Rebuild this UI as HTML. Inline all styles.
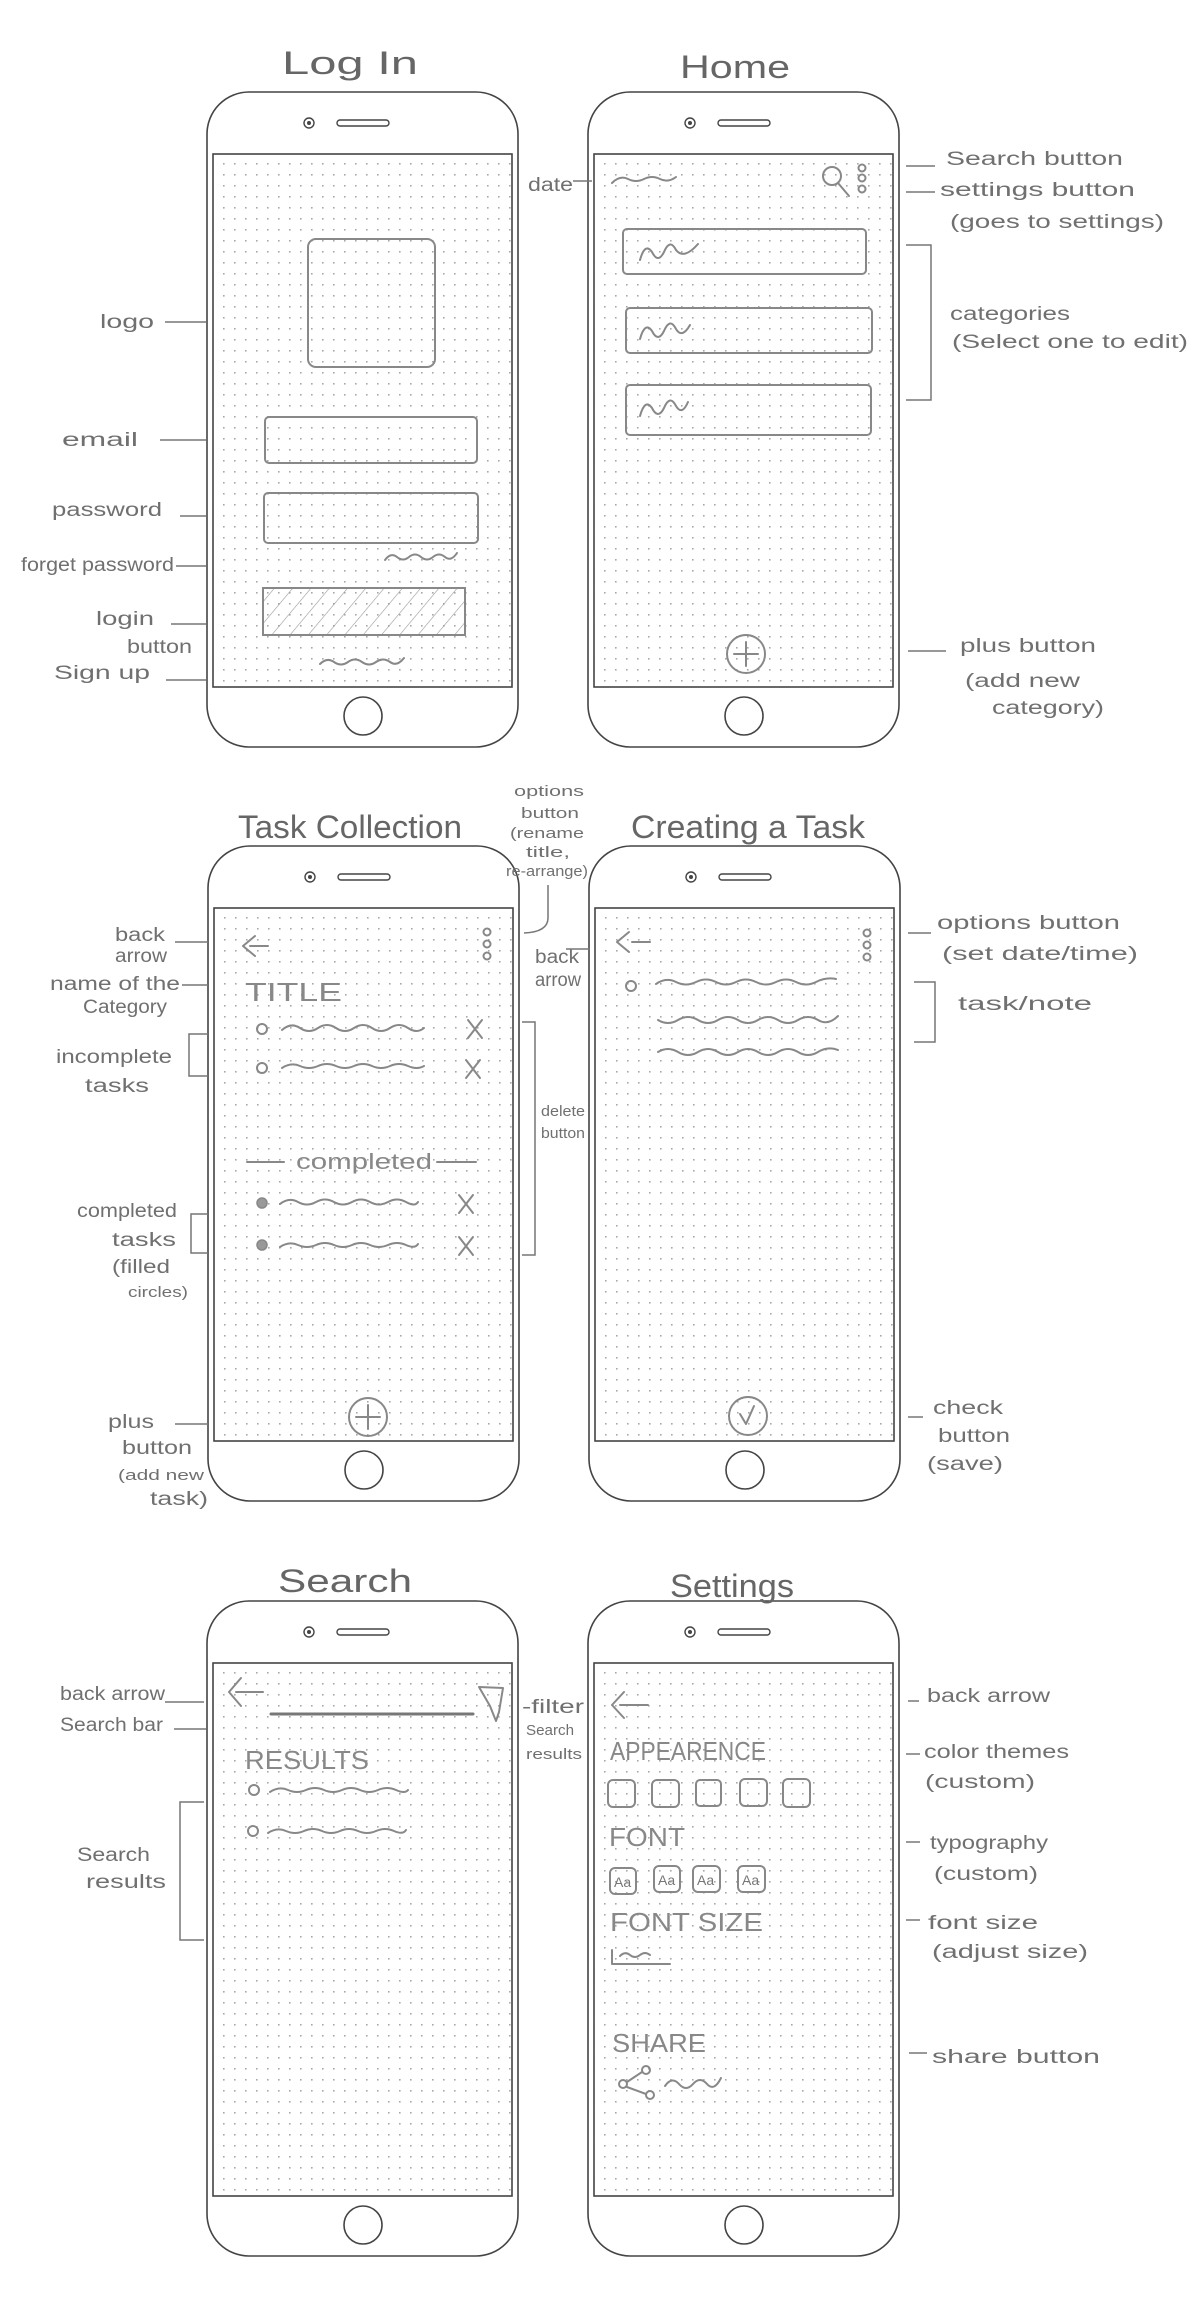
<!DOCTYPE html>
<html><head><meta charset="utf-8"><style>
html,body{margin:0;padding:0;background:#fff;}
svg{display:block;}
text{font-family:"Liberation Sans",sans-serif;fill:#707070;}
.t{font-size:32px;fill:#666;}
.l{font-size:19px;}
.s{font-size:15px;}
.sc{font-size:26px;fill:#888;}
.p{fill:none;stroke:#888;stroke-width:2;stroke-linecap:round;stroke-linejoin:round;}
.ln{fill:none;stroke:#777;stroke-width:1.5;}
</style></head><body>
<svg width="1200" height="2306" viewBox="0 0 1200 2306" xmlns="http://www.w3.org/2000/svg">
<defs>
<pattern id="dots" x="0" y="0" width="11" height="11" patternUnits="userSpaceOnUse">
<rect x="5" y="5" width="1.6" height="1.6" fill="#a8a8a8"/>
</pattern>
<pattern id="hatch" width="14" height="14" patternUnits="userSpaceOnUse" patternTransform="rotate(40)">
<line x1="0" y1="0" x2="0" y2="14" stroke="#999" stroke-width="1.2"/>
</pattern>
<g id="phone">
<rect x="0" y="0" width="311" height="655" rx="42" fill="#fff" stroke="#444" stroke-width="1.6"/>
<rect x="6" y="62" width="299" height="533" fill="url(#dots)" stroke="#444" stroke-width="1.6"/>
<circle cx="102" cy="31" r="5" fill="none" stroke="#444" stroke-width="1.4"/>
<circle cx="102" cy="31" r="2" fill="#444"/>
<rect x="130" y="28" width="52" height="6" rx="3" fill="none" stroke="#444" stroke-width="1.4"/>
<circle cx="156" cy="624" r="19" fill="none" stroke="#444" stroke-width="1.6"/>
</g>
</defs>

<use href="#phone" x="207" y="92"/>
<use href="#phone" x="588" y="92"/>
<use href="#phone" x="208" y="846"/>
<use href="#phone" x="589" y="846"/>
<use href="#phone" x="207" y="1601"/>
<use href="#phone" x="588" y="1601"/>

<text class="t" x="282" y="74" textLength="136" lengthAdjust="spacingAndGlyphs">Log In</text>
<text class="t" x="680" y="78" textLength="110" lengthAdjust="spacingAndGlyphs">Home</text>
<text class="t" x="238" y="838" textLength="224" lengthAdjust="spacingAndGlyphs">Task Collection</text>
<text class="t" x="631" y="838" textLength="234" lengthAdjust="spacingAndGlyphs">Creating a Task</text>
<text class="t" x="278" y="1592" textLength="134" lengthAdjust="spacingAndGlyphs">Search</text>
<text class="t" x="670" y="1597" textLength="124" lengthAdjust="spacingAndGlyphs">Settings</text>

<!-- LOG IN -->
<rect class="p" x="308" y="239" width="127" height="128" rx="8"/>
<rect class="p" x="265" y="417" width="212" height="46" rx="4"/>
<rect class="p" x="264" y="493" width="214" height="50" rx="4"/>
<path class="p" d="M385 560 q6 -8 12 -3 t12 0 t12 0 t12 0 t12 0 t12 -4"/>
<rect x="263" y="588" width="202" height="47" fill="url(#hatch)" stroke="#888" stroke-width="2"/>
<path class="p" d="M320 664 q7 -7 14 -2 t14 0 t14 0 t14 0 t14 0 t14 -4"/>
<text class="l" x="100" y="328" textLength="54" lengthAdjust="spacingAndGlyphs">logo</text>
<line class="ln" x1="165" y1="322" x2="206" y2="322"/>
<text class="l" x="62" y="446" textLength="76" lengthAdjust="spacingAndGlyphs">email</text>
<line class="ln" x1="160" y1="440" x2="206" y2="440"/>
<text class="l" x="52" y="516" textLength="110" lengthAdjust="spacingAndGlyphs">password</text>
<line class="ln" x1="180" y1="516" x2="206" y2="516"/>
<text class="l" x="21" y="571" textLength="153" lengthAdjust="spacingAndGlyphs">forget password</text>
<line class="ln" x1="176" y1="566" x2="206" y2="566"/>
<text class="l" x="96" y="625" textLength="58" lengthAdjust="spacingAndGlyphs">login</text>
<text class="l" x="127" y="653" textLength="65" lengthAdjust="spacingAndGlyphs">button</text>
<line class="ln" x1="171" y1="624" x2="206" y2="624"/>
<text class="l" x="54" y="679" textLength="96" lengthAdjust="spacingAndGlyphs">Sign up</text>
<line class="ln" x1="166" y1="680" x2="206" y2="680"/>

<!-- HOME -->
<path class="p" d="M612 183 q8 -8 16 -4 t16 0 t16 0 t16 -2"/>
<text class="l" x="528" y="191" textLength="45" lengthAdjust="spacingAndGlyphs">date</text>
<line class="ln" x1="573" y1="181" x2="592" y2="181"/>
<circle class="p" cx="832" cy="176" r="9"/>
<line class="p" x1="838" y1="183" x2="849" y2="196"/>
<circle class="p" cx="862" cy="168" r="3.5"/>
<circle class="p" cx="862" cy="178" r="3.5"/>
<circle class="p" cx="862" cy="189" r="3.5"/>
<rect class="p" x="623" y="229" width="243" height="45" rx="4"/>
<path class="p" d="M640 260 q5 -18 12 -8 q6 12 12 0 q6 -14 12 -2 q8 10 22 -6"/>
<rect class="p" x="626" y="308" width="246" height="45" rx="4"/>
<path class="p" d="M640 339 q5 -18 12 -8 q6 12 12 0 q6 -14 12 -2 q6 10 14 -4"/>
<rect class="p" x="626" y="385" width="245" height="50" rx="4"/>
<path class="p" d="M640 416 q5 -18 12 -8 q6 12 12 0 q6 -14 12 -2 q6 10 12 -4"/>
<circle class="p" cx="746" cy="654" r="19"/>
<line class="p" x1="746" y1="642" x2="746" y2="666"/>
<line class="p" x1="734" y1="654" x2="758" y2="654"/>
<line class="ln" x1="906" y1="166" x2="935" y2="166"/>
<text class="l" x="946" y="165" textLength="177" lengthAdjust="spacingAndGlyphs">Search button</text>
<line class="ln" x1="906" y1="192" x2="935" y2="192"/>
<text class="l" x="940" y="196" textLength="195" lengthAdjust="spacingAndGlyphs">settings button</text>
<text class="l" x="950" y="228" textLength="214" lengthAdjust="spacingAndGlyphs">(goes to settings)</text>
<path class="ln" d="M906 245 H931 V400 H906"/>
<text class="l" x="950" y="320" textLength="120" lengthAdjust="spacingAndGlyphs">categories</text>
<text class="l" x="952" y="348" textLength="236" lengthAdjust="spacingAndGlyphs">(Select one to edit)</text>
<line class="ln" x1="908" y1="651" x2="946" y2="651"/>
<text class="l" x="960" y="652" textLength="136" lengthAdjust="spacingAndGlyphs">plus button</text>
<text class="l" x="965" y="687" textLength="115" lengthAdjust="spacingAndGlyphs">(add new</text>
<text class="l" x="992" y="714" textLength="112" lengthAdjust="spacingAndGlyphs">category)</text>

<!-- TASK COLLECTION -->
<path class="p" d="M250 946 H268 M243 946 l12 -10 M243 946 l12 10"/>
<circle class="p" cx="487" cy="932" r="3.5"/>
<circle class="p" cx="487" cy="944" r="3.5"/>
<circle class="p" cx="487" cy="956" r="3.5"/>
<text class="sc" x="245" y="1001" textLength="97" lengthAdjust="spacingAndGlyphs">TITLE</text>
<circle class="p" cx="262" cy="1029" r="5"/>
<path class="p" d="M282 1030 q9 -8 18 -2 t18 0 t18 0 t18 0 t18 0 t18 0 t18 0 t16 0"/>
<path class="p" d="M468 1020 l14 18 M482 1020 l-14 18"/>
<circle class="p" cx="262" cy="1068" r="5"/>
<path class="p" d="M282 1068 q9 -6 18 -2 t18 0 t18 0 t18 0 t18 0 t18 0 t18 0 t16 0"/>
<path class="p" d="M466 1060 l14 18 M480 1060 l-14 18"/>
<line class="p" x1="247" y1="1162" x2="284" y2="1162"/>
<text x="296" y="1169" font-size="22" textLength="136" lengthAdjust="spacingAndGlyphs" style="fill:#888">completed</text>
<line class="p" x1="437" y1="1162" x2="476" y2="1162"/>
<circle cx="262" cy="1203" r="5" fill="#999" stroke="#888" stroke-width="1.5"/>
<path class="p" d="M280 1204 q9 -7 18 -2 t18 0 t18 0 t18 0 t18 0 t18 0 t18 0 t12 0"/>
<path class="p" d="M459 1195 l14 18 M473 1195 l-14 18"/>
<circle cx="262" cy="1245" r="5" fill="#999" stroke="#888" stroke-width="1.5"/>
<path class="p" d="M280 1247 q9 -6 18 -2 t18 0 t18 0 t18 0 t18 0 t18 0 t18 0 t12 -1"/>
<path class="p" d="M459 1237 l14 18 M473 1237 l-14 18"/>
<circle class="p" cx="368" cy="1417" r="19"/>
<line class="p" x1="368" y1="1405" x2="368" y2="1429"/>
<line class="p" x1="356" y1="1417" x2="380" y2="1417"/>
<text class="l" x="115" y="941" textLength="50" lengthAdjust="spacingAndGlyphs">back</text>
<text class="l" x="115" y="962" textLength="52" lengthAdjust="spacingAndGlyphs">arrow</text>
<line class="ln" x1="175" y1="942" x2="208" y2="942"/>
<text class="l" x="50" y="990" textLength="130" lengthAdjust="spacingAndGlyphs">name of the</text>
<text class="l" x="83" y="1013" textLength="84" lengthAdjust="spacingAndGlyphs">Category</text>
<line class="ln" x1="182" y1="985" x2="208" y2="985"/>
<path class="ln" d="M208 1034 H189 V1076 H208"/>
<text class="l" x="56" y="1063" textLength="116" lengthAdjust="spacingAndGlyphs">incomplete</text>
<text class="l" x="85" y="1092" textLength="64" lengthAdjust="spacingAndGlyphs">tasks</text>
<text class="l" x="77" y="1217" textLength="100" lengthAdjust="spacingAndGlyphs">completed</text>
<text class="l" x="112" y="1246" textLength="64" lengthAdjust="spacingAndGlyphs">tasks</text>
<text class="l" x="112" y="1273" textLength="58" lengthAdjust="spacingAndGlyphs">(filled</text>
<text class="s" x="128" y="1297" textLength="60" lengthAdjust="spacingAndGlyphs">circles)</text>
<path class="ln" d="M208 1214 H191 V1253 H208"/>
<text class="l" x="108" y="1428" textLength="46" lengthAdjust="spacingAndGlyphs">plus</text>
<text class="l" x="122" y="1454" textLength="70" lengthAdjust="spacingAndGlyphs">button</text>
<text class="s" x="118" y="1480" textLength="86" lengthAdjust="spacingAndGlyphs">(add new</text>
<text class="l" x="150" y="1505" textLength="58" lengthAdjust="spacingAndGlyphs">task)</text>
<line class="ln" x1="175" y1="1424" x2="208" y2="1424"/>
<text class="s" x="514" y="796" textLength="70" lengthAdjust="spacingAndGlyphs">options</text>
<text class="s" x="521" y="818" textLength="58" lengthAdjust="spacingAndGlyphs">button</text>
<text class="s" x="510" y="838" textLength="74" lengthAdjust="spacingAndGlyphs">(rename</text>
<text class="s" x="526" y="857" textLength="44" lengthAdjust="spacingAndGlyphs">title,</text>
<text class="s" x="506" y="876" textLength="82" lengthAdjust="spacingAndGlyphs">re-arrange)</text>
<path class="ln" d="M548 885 V918 Q548 932 524 933"/>
<path class="ln" d="M522 1022 H535 V1255 H522"/>
<text class="s" x="541" y="1116" textLength="44" lengthAdjust="spacingAndGlyphs">delete</text>
<text class="s" x="541" y="1138" textLength="44" lengthAdjust="spacingAndGlyphs">button</text>
<text class="l" x="535" y="963" textLength="44" lengthAdjust="spacingAndGlyphs">back</text>
<text class="l" x="535" y="986" textLength="46" lengthAdjust="spacingAndGlyphs">arrow</text>
<line class="ln" x1="566" y1="949" x2="590" y2="949"/>

<!-- CREATING A TASK -->
<path class="p" d="M632 942 H650 M617 942 l12 -10 M617 942 l12 10"/>
<circle class="p" cx="867" cy="933" r="3.5"/>
<circle class="p" cx="867" cy="945" r="3.5"/>
<circle class="p" cx="867" cy="957" r="3.5"/>
<circle class="p" cx="631" cy="986" r="5"/>
<path class="p" d="M656 984 q10 -7 20 -2 t20 0 t20 0 t20 0 t20 0 t20 0 t20 0 t20 0 t20 -3"/>
<path class="p" d="M658 1020 q10 6 20 0 t20 0 t20 0 t20 0 t20 0 t20 0 t20 0 t20 0 t20 -4"/>
<path class="p" d="M658 1052 q10 -6 20 0 t20 0 t20 0 t20 0 t20 0 t20 0 t20 0 t20 0 t20 -2"/>
<circle class="p" cx="748" cy="1416" r="19"/>
<path class="p" d="M740 1414 l6 10 l8 -18"/>
<line class="ln" x1="908" y1="933" x2="931" y2="933"/>
<text class="l" x="937" y="929" textLength="183" lengthAdjust="spacingAndGlyphs">options button</text>
<text class="l" x="942" y="960" textLength="196" lengthAdjust="spacingAndGlyphs">(set date/time)</text>
<path class="ln" d="M914 982 H935 V1042 H914"/>
<text class="l" x="958" y="1010" textLength="134" lengthAdjust="spacingAndGlyphs">task/note</text>
<line class="ln" x1="908" y1="1417" x2="923" y2="1417"/>
<text class="l" x="933" y="1414" textLength="70" lengthAdjust="spacingAndGlyphs">check</text>
<text class="l" x="938" y="1442" textLength="72" lengthAdjust="spacingAndGlyphs">button</text>
<text class="l" x="927" y="1470" textLength="76" lengthAdjust="spacingAndGlyphs">(save)</text>

<!-- SEARCH -->
<path class="p" d="M236 1692 H263 M229 1692 l12 -14 M229 1692 l12 14"/>
<line x1="271" y1="1714" x2="473" y2="1714" stroke="#777" stroke-width="3" stroke-linecap="round"/>
<path class="p" d="M479 1687 L503 1688 L499 1712 L496 1721 L490 1706 Z"/>
<text class="sc" x="245" y="1769" textLength="124" lengthAdjust="spacingAndGlyphs">RESULTS</text>
<circle class="p" cx="254" cy="1790" r="5"/>
<path class="p" d="M270 1792 q9 -6 18 -2 t18 0 t18 0 t18 0 t18 0 t18 0 t18 0 t12 0"/>
<circle class="p" cx="253" cy="1831" r="5"/>
<path class="p" d="M268 1833 q9 -6 18 -2 t18 0 t18 0 t18 0 t18 0 t18 0 t18 0 t12 -1"/>
<text class="l" x="60" y="1700" textLength="105" lengthAdjust="spacingAndGlyphs">back arrow</text>
<line class="ln" x1="165" y1="1702" x2="204" y2="1702"/>
<text class="l" x="60" y="1731" textLength="103" lengthAdjust="spacingAndGlyphs">Search bar</text>
<line class="ln" x1="174" y1="1729" x2="206" y2="1729"/>
<path class="ln" d="M204 1802 H180 V1940 H204"/>
<text class="l" x="77" y="1861" textLength="73" lengthAdjust="spacingAndGlyphs">Search</text>
<text class="l" x="86" y="1888" textLength="80" lengthAdjust="spacingAndGlyphs">results</text>
<text class="l" x="522" y="1713" textLength="62" lengthAdjust="spacingAndGlyphs">-filter</text>
<text class="s" x="526" y="1735" textLength="48" lengthAdjust="spacingAndGlyphs">Search</text>
<text class="s" x="526" y="1759" textLength="56" lengthAdjust="spacingAndGlyphs">results</text>

<!-- SETTINGS -->
<path class="p" d="M620 1705 H648 M612 1705 l12 -13 M612 1705 l12 13"/>
<text class="sc" x="610" y="1760" textLength="156" lengthAdjust="spacingAndGlyphs">APPEARENCE</text>
<rect class="p" x="608" y="1780" width="27" height="27" rx="5"/>
<rect class="p" x="652" y="1780" width="27" height="27" rx="5"/>
<rect class="p" x="696" y="1780" width="25" height="26" rx="4"/>
<rect class="p" x="740" y="1779" width="27" height="27" rx="5"/>
<rect class="p" x="783" y="1779" width="27" height="28" rx="5"/>
<text class="sc" x="609" y="1846" textLength="76" lengthAdjust="spacingAndGlyphs">FONT</text>
<rect class="p" x="610" y="1868" width="26" height="26" rx="5"/>
<rect class="p" x="654" y="1866" width="26" height="26" rx="5"/>
<rect class="p" x="693" y="1866" width="27" height="26" rx="5"/>
<rect class="p" x="738" y="1866" width="27" height="26" rx="5"/>
<text x="614" y="1887" font-size="14" style="fill:#777">Aa</text>
<text x="658" y="1885" font-size="14" style="fill:#777">Aa</text>
<text x="697" y="1885" font-size="14" style="fill:#777">Aa</text>
<text x="742" y="1885" font-size="14" style="fill:#777">Aa</text>
<text class="sc" x="610" y="1931" textLength="153" lengthAdjust="spacingAndGlyphs">FONT SIZE</text>
<path class="p" d="M612 1950 V1964 H670"/>
<path class="p" d="M620 1956 q5 -5 10 -1 t10 0 t10 0"/>
<text class="sc" x="612" y="2052" textLength="94" lengthAdjust="spacingAndGlyphs">SHARE</text>
<circle class="p" cx="623" cy="2084" r="4"/>
<circle class="p" cx="646" cy="2070" r="4"/>
<circle class="p" cx="650" cy="2095" r="4"/>
<path class="p" d="M627 2082 L642 2072 M627 2087 L646 2094"/>
<path class="p" d="M665 2086 q7 -10 14 -2 t14 0 t14 0 t14 -6"/>
<line class="ln" x1="908" y1="1701" x2="919" y2="1701"/>
<text class="l" x="927" y="1702" textLength="123" lengthAdjust="spacingAndGlyphs">back arrow</text>
<line class="ln" x1="906" y1="1754" x2="920" y2="1754"/>
<text class="l" x="924" y="1758" textLength="145" lengthAdjust="spacingAndGlyphs">color themes</text>
<text class="l" x="925" y="1788" textLength="110" lengthAdjust="spacingAndGlyphs">(custom)</text>
<line class="ln" x1="906" y1="1842" x2="920" y2="1842"/>
<text class="l" x="930" y="1849" textLength="118" lengthAdjust="spacingAndGlyphs">typography</text>
<text class="l" x="934" y="1880" textLength="104" lengthAdjust="spacingAndGlyphs">(custom)</text>
<line class="ln" x1="906" y1="1920" x2="920" y2="1920"/>
<text class="l" x="928" y="1929" textLength="110" lengthAdjust="spacingAndGlyphs">font size</text>
<text class="l" x="932" y="1958" textLength="156" lengthAdjust="spacingAndGlyphs">(adjust size)</text>
<line class="ln" x1="909" y1="2053" x2="927" y2="2053"/>
<text class="l" x="932" y="2063" textLength="168" lengthAdjust="spacingAndGlyphs">share button</text>
</svg>
</body></html>
